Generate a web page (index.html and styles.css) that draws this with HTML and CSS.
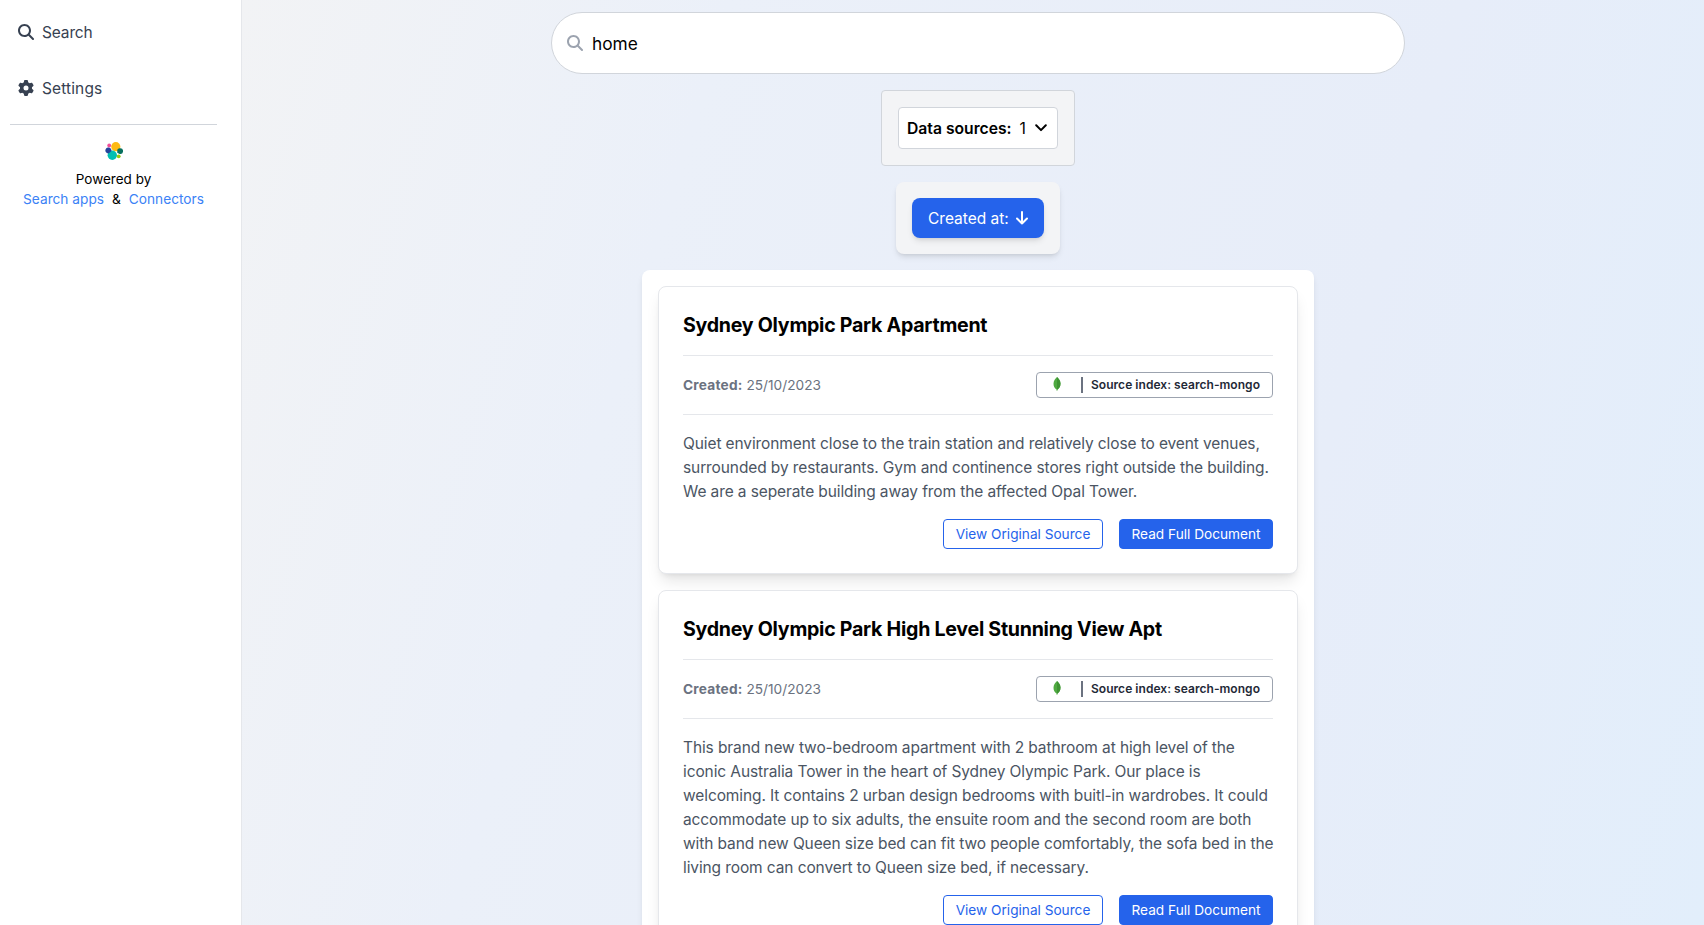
FILE: index.html
```html
<!DOCTYPE html>
<html lang="en">
<head>
<meta charset="utf-8">
<title>Search</title>
<link rel="stylesheet" href="styles.css">
</head>
<body>
<svg width="0" height="0" class="defs">
  <symbol id="glass" viewBox="0 0 512 512"><path d="M416 208c0 45.9-14.9 88.300-40 122.700L502.600 457.400c12.500 12.500 12.500 32.800 0 45.300s-32.800 12.500-45.300 0L330.700 376c-34.400 25.200-76.800 40-122.700 40C93.100 416 0 322.900 0 208S93.100 0 208 0S416 93.100 416 208zM208 352a144 144 0 1 0 0-288 144 144 0 1 0 0 288z"/></symbol>
  <symbol id="leaf" viewBox="0 0 8 14"><path d="M4 0C6 2 7.500 4 7.500 6.800C7.500 9.500 6 11.500 4.500 12.600L4.200 14H3.800L3.500 12.600C1.800 11.500.5 9.500.5 6.800C.5 4 2 2 4 0Z" fill="#4faa41"/><path d="M4 0C6 2 7.500 4 7.500 6.800C7.500 9.500 6 11.500 4.500 12.600L4 12.800Z" fill="#3f9433"/></symbol>
</svg>
<div class="app">
  <aside class="sidebar">
    <nav class="nav">
      <a class="nav-item"><svg class="nav-icon"><use href="#glass"/></svg><span class="t-search">Search</span></a>
      <a class="nav-item"><svg class="nav-icon" viewBox="0 0 512 512"><path d="M495.900 166.600c3.200 8.700 .5 18.400-6.400 24.600l-43.300 39.400c1.100 8.300 1.700 16.800 1.700 25.400s-.6 17.100-1.700 25.400l43.300 39.400c6.900 6.200 9.600 15.900 6.400 24.600c-4.400 11.900-9.700 23.300-15.800 34.300l-4.700 8.100c-6.600 11-14 21.400-22.100 31.200c-5.900 7.200-15.700 9.600-24.500 6.800l-55.700-17.700c-13.400 10.300-28.200 18.900-44 25.400l-12.500 57.100c-2 9.100-9 16.300-18.200 17.800c-13.800 2.300-28 3.500-42.500 3.500s-28.700-1.200-42.500-3.500c-9.200-1.500-16.200-8.700-18.200-17.800l-12.500-57.100c-15.800-6.500-30.600-15.100-44-25.400L83.100 425.900c-8.800 2.800-18.600 .3-24.500-6.800c-8.100-9.800-15.500-20.200-22.100-31.200l-4.700-8.100c-6.100-11-11.400-22.400-15.800-34.300c-3.200-8.700-.5-18.400 6.400-24.600l43.300-39.400C64.600 273.100 64 264.600 64 256s.6-17.100 1.700-25.400L22.400 191.200c-6.900-6.200-9.600-15.900-6.400-24.600c4.400-11.900 9.700-23.300 15.800-34.300l4.700-8.100c6.600-11 14-21.400 22.100-31.200c5.900-7.200 15.700-9.600 24.500-6.800l55.700 17.700c13.400-10.300 28.200-18.900 44-25.400l12.500-57.100c2-9.100 9-16.300 18.200-17.800C227.300 1.200 241.500 0 256 0s28.700 1.200 42.500 3.500c9.200 1.500 16.200 8.700 18.200 17.800l12.500 57.100c15.800 6.500 30.600 15.100 44 25.400l55.700-17.700c8.800-2.800 18.600-.3 24.500 6.800c8.100 9.800 15.500 20.200 22.100 31.200l4.700 8.100c6.100 11 11.400 22.400 15.800 34.300zM256 336a80 80 0 1 0 0-160 80 80 0 1 0 0 160z"/></svg><span class="t-settings">Settings</span></a>
    </nav>
    <div class="powered">
      <svg class="elastic" viewBox="0 0 18 18">
        <circle cx="10.800" cy="4.700" r="4.600" fill="#fdb913"/><circle cx="7.300" cy="13.200" r="4.700" fill="#00bfb3"/>
        <circle cx="4.200" cy="3.500" r="1.900" fill="#f04e98"/><path d="M5.500 6.300A3 3 0 1 0 3.200 11.400C5 10.800 6.300 9.400 6.600 8.200Z" fill="#24439b"/>
        <path d="M12.300 9.700A2.900 2.900 0 1 1 14.700 12L12.200 10.800Z" fill="#07705e"/><circle cx="13.700" cy="14.300" r="1.900" fill="#93c90e"/>
      </svg>
      <div class="t-powered">Powered by</div>
      <div class="links"><a>Search apps</a><span class="amp">&amp;</span><a>Connectors</a></div>
    </div>
  </aside>
  <main class="main">
    <div class="searchbar"><svg class="search-icon"><use href="#glass"/></svg><span class="query">home</span></div>
    <div class="facet"><div class="select"><span class="label">Data sources:</span><span class="count">1</span>
      <svg class="chevron" viewBox="0 0 12 8"><path d="M1.200 1.300L6 6.100L10.800 1.300"/></svg></div></div>
    <div class="sort"><div class="sort-btn"><span class="label">Created at:</span>
      <svg class="arrow" viewBox="0 0 12 14"><path d="M6 1V12.500M1 7.500L6 12.500L11 7.500"/></svg></div></div>
    <section class="results">
      <article class="card">
        <h2 class="title">Sydney Olympic Park Apartment</h2>
        <div class="meta"><div class="date"><b>Created:</b> <span>25/10/2023</span></div>
          <div class="badge"><svg class="leaf"><use href="#leaf"/></svg><i class="bar"></i><span>Source index: search-mongo</span></div></div>
        <p class="text">Quiet environment close to the train station and relatively close to event venues,<br>surrounded by restaurants. Gym and continence stores right outside the building.<br>We are a seperate building away from the affected Opal Tower.</p>
        <div class="actions"><a class="btn outline">View Original Source</a><a class="btn solid">Read Full Document</a></div>
      </article>
      <article class="card">
        <h2 class="title">Sydney Olympic Park High Level Stunning View Apt</h2>
        <div class="meta"><div class="date"><b>Created:</b> <span>25/10/2023</span></div>
          <div class="badge"><svg class="leaf"><use href="#leaf"/></svg><i class="bar"></i><span>Source index: search-mongo</span></div></div>
        <p class="text">This brand new two-bedroom apartment with 2 bathroom at high level of the<br>iconic Australia Tower in the heart of Sydney Olympic Park. Our place is<br>welcoming. It contains 2 urban design bedrooms with buitl-in wardrobes. It could<br>accommodate up to six adults, the ensuite room and the second room are both<br>with band new Queen size bed can fit two people comfortably, the sofa bed in the<br>living room can convert to Queen size bed, if necessary.</p>
        <div class="actions"><a class="btn outline">View Original Source</a><a class="btn solid">Read Full Document</a></div>
      </article>
    </section>
  </main>
</div>
</body>
</html>
```

FILE: styles.css
```css
* { box-sizing: border-box; }
body { margin: 0; font-family: Inter, "Liberation Sans", sans-serif; font-size: 15.5px; line-height: 24px; color: #000; white-space: nowrap; overflow: hidden; }
.defs { display: block; }
.app { display: flex; height: 925px; overflow: hidden; }
.sidebar { width: 242px; flex: none; background: #fff; border-right: 1px solid #e5e7eb; padding: 0 24px 0 10px; }
.nav { height: 125px; border-bottom: 1px solid #d1d5db; padding: 20px 0 0 8px; display: flex; flex-direction: column; gap: 32px; color: #374151; }
.nav-item { display: flex; align-items: center; gap: 8px; height: 24px; }
.nav-icon { width: 16px; height: 16px; fill: #374151; }
.t-search { letter-spacing: -0.15px; padding-top: 2px; }
.t-settings { letter-spacing: 0.12px; padding-top: 2px; }
.powered { display: flex; flex-direction: column; align-items: center; padding-top: 17px; font-size: 13.7px; line-height: 20px; }
.t-powered { font-size: 13.5px; }
.elastic { width: 18px; height: 18px; margin-bottom: 9px; }
.links { display: flex; gap: 8px; }
.links a { color: #3b82f6; }
.main { flex: 1; display: flex; flex-direction: column; align-items: center; padding: 12px 0 0 10px; background: linear-gradient(107deg, #f2f3f5 0%, #ebf0f9 28%, #e7edf9 70%, #e2eefb 100%); }
.searchbar { width: 854px; height: 62px; flex: none; border: 1px solid #d1d5db; border-radius: 31px; background: #fff; display: flex; align-items: center; padding-left: 15px; gap: 9px; font-size: 17.3px; }
.query { padding-top: 1px; }
.search-icon { width: 16px; height: 16px; fill: #9ca3af; }
.facet { margin-top: 16px; width: 194px; height: 76px; flex: none; border: 1px solid #d1d5db; border-radius: 4px; background: #f3f4f6; padding: 16px; }
.select { height: 42px; border: 1px solid #d1d5db; border-radius: 4px; background: #fff; padding: 0 8px; display: flex; align-items: center; font-size: 15.7px; font-weight: 600; }
.label { padding-top: 2px; }
.count { font-weight: 400; margin: 0 9px 0 8px; padding-top: 2px; }
.chevron { width: 12px; height: 8px; margin-top: -1px; }
.chevron path { fill: none; stroke: #000; stroke-width: 2; stroke-linecap: round; stroke-linejoin: round; }
.sort { margin-top: 16px; width: 164px; height: 72px; flex: none; border-radius: 8px; background: #f3f4f6; padding: 16px; box-shadow: 0 4px 6px -1px rgba(0,0,0,.1), 0 2px 4px -2px rgba(0,0,0,.1); }
.sort-btn { height: 40px; border-radius: 8px; background: #2563eb; color: #fff; padding: 0 16px; display: flex; align-items: center; justify-content: space-between; box-shadow: 0 4px 6px -1px rgba(0,0,0,.1), 0 2px 4px -2px rgba(0,0,0,.1); }
.arrow { width: 12px; height: 14px; }
.arrow path { fill: none; stroke: #fff; stroke-width: 2; stroke-linecap: round; stroke-linejoin: round; }
.results { margin-top: 16px; width: 672px; flex: none; height: 800px; border-radius: 8px; background: #fff; padding: 16px; box-shadow: 0 4px 6px -1px rgba(0,0,0,.1); }
.card { border: 1px solid #e5e7eb; border-radius: 8px; background: #fff; padding: 24px; margin-bottom: 16px; box-shadow: 0 10px 15px -3px rgba(0,0,0,.1), 0 4px 6px -4px rgba(0,0,0,.1); }
.title { margin: 0; height: 45px; border-bottom: 1px solid #e5e7eb; font-size: 19.6px; line-height: 28px; font-weight: 700; letter-spacing: -0.26px; }
.meta { height: 59px; border-bottom: 1px solid #e5e7eb; display: flex; align-items: center; justify-content: space-between; }
.date { font-size: 13.7px; color: #6b7280; }
.date b { font-weight: 700; letter-spacing: 0.22px; }
.badge { width: 237px; height: 26px; border: 1px solid #9ca3af; border-radius: 4px; display: flex; align-items: center; padding-left: 16px; font-size: 12px; font-weight: 600; letter-spacing: 0.04px; color: #1f2937; }
.leaf { width: 8px; height: 14px; margin-top: -2px; }
.bar { width: 2px; height: 16px; background: #6b7280; margin: -1px 8px 0 20px; }
.text { margin: 0; padding: 17px 0 15px; color: #4b5563; letter-spacing: -0.105px; }
.actions { display: flex; justify-content: flex-end; gap: 16px; }
.btn { height: 30px; border: 1px solid #2563eb; border-radius: 4px; font-size: 13.65px; line-height: 28px; text-align: center; }
.outline { width: 160px; color: #2563eb; background: #fff; }
.solid { width: 154px; color: #fff; background: #2563eb; }
```
